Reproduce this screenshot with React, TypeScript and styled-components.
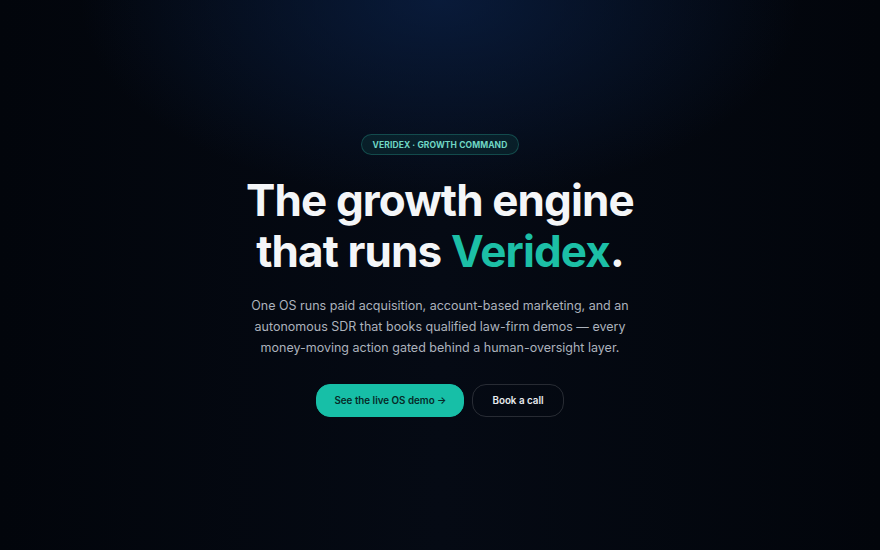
import React from "react";
import styled, { createGlobalStyle } from "styled-components";

const Global = createGlobalStyle`
  html, body { margin: 0; padding: 0; background: #03060d; }
  * { box-sizing: border-box; }
`;

const Page = styled.main`
  width: 880px;
  height: 550px;
  overflow: hidden;
  background:
    radial-gradient(ellipse 360px 200px at 50% 0%, rgba(10, 32, 70, 0.75), rgba(10, 32, 70, 0) 100%),
    linear-gradient(90deg, #02050b 0%, #050a14 50%, #02050b 100%);
  display: flex;
  flex-direction: column;
  align-items: center;
  padding-top: 134px;
  font-family: Inter, "Noto Sans", sans-serif;
`;

const Badge = styled.div`
  height: 21px;
  padding: 0 11px;
  border-radius: 999px;
  border: 1px solid rgba(45, 180, 160, 0.3);
  background: rgba(20, 110, 100, 0.18);
  color: #6fd6c4;
  font-size: 8.5px;
  font-weight: 700;
  letter-spacing: 0.01em;
  text-transform: uppercase;
  display: flex;
  align-items: center;
`;

const Title = styled.h1`
  margin: 20px 0 0;
  font-family: Inter, "Noto Sans", sans-serif;
  font-size: 44px;
  font-weight: 700;
  line-height: 51px;
  letter-spacing: -0.02em;
  color: #f4f6f8;
  text-align: center;
`;

const Accent = styled.span`
  color: #1cbfa6;
`;

const Lead = styled.p`
  margin: 18px 0 0;
  max-width: 390px;
  font-size: 12.5px;
  line-height: 21px;
  color: #acb2bc;
  text-align: center;
`;

const Actions = styled.div`
  margin-top: 26px;
  display: flex;
  gap: 8px;
`;

const Button = styled.button<{ $primary?: boolean }>`
  height: 33px;
  padding: 0 ${(p) => (p.$primary ? 17 : 19)}px;
  border-radius: 14px;
  font-family: Inter, "Noto Sans", sans-serif;
  font-size: 9.8px;
  font-weight: 600;
  cursor: pointer;
  border: 1px solid ${(p) => (p.$primary ? "#17bfa7" : "rgba(255,255,255,0.14)")};
  background: ${(p) => (p.$primary ? "#17bfa7" : "transparent")};
  color: ${(p) => (p.$primary ? "#062a27" : "#e8eaee")};
`;

export default function App() {
  return (
    <>
      <Global />
      <Page>
        <Badge>Veridex · Growth Command</Badge>
        <Title>
          The growth engine
          <br />
          that runs <Accent>Veridex</Accent>.
        </Title>
        <Lead>
          One OS runs paid acquisition, account-based marketing, and an autonomous SDR that books
          qualified law-firm demos — every money-moving action gated behind a human-oversight layer.
        </Lead>
        <Actions>
          <Button $primary>See the live OS demo →</Button>
          <Button>Book a call</Button>
        </Actions>
      </Page>
    </>
  );
}
